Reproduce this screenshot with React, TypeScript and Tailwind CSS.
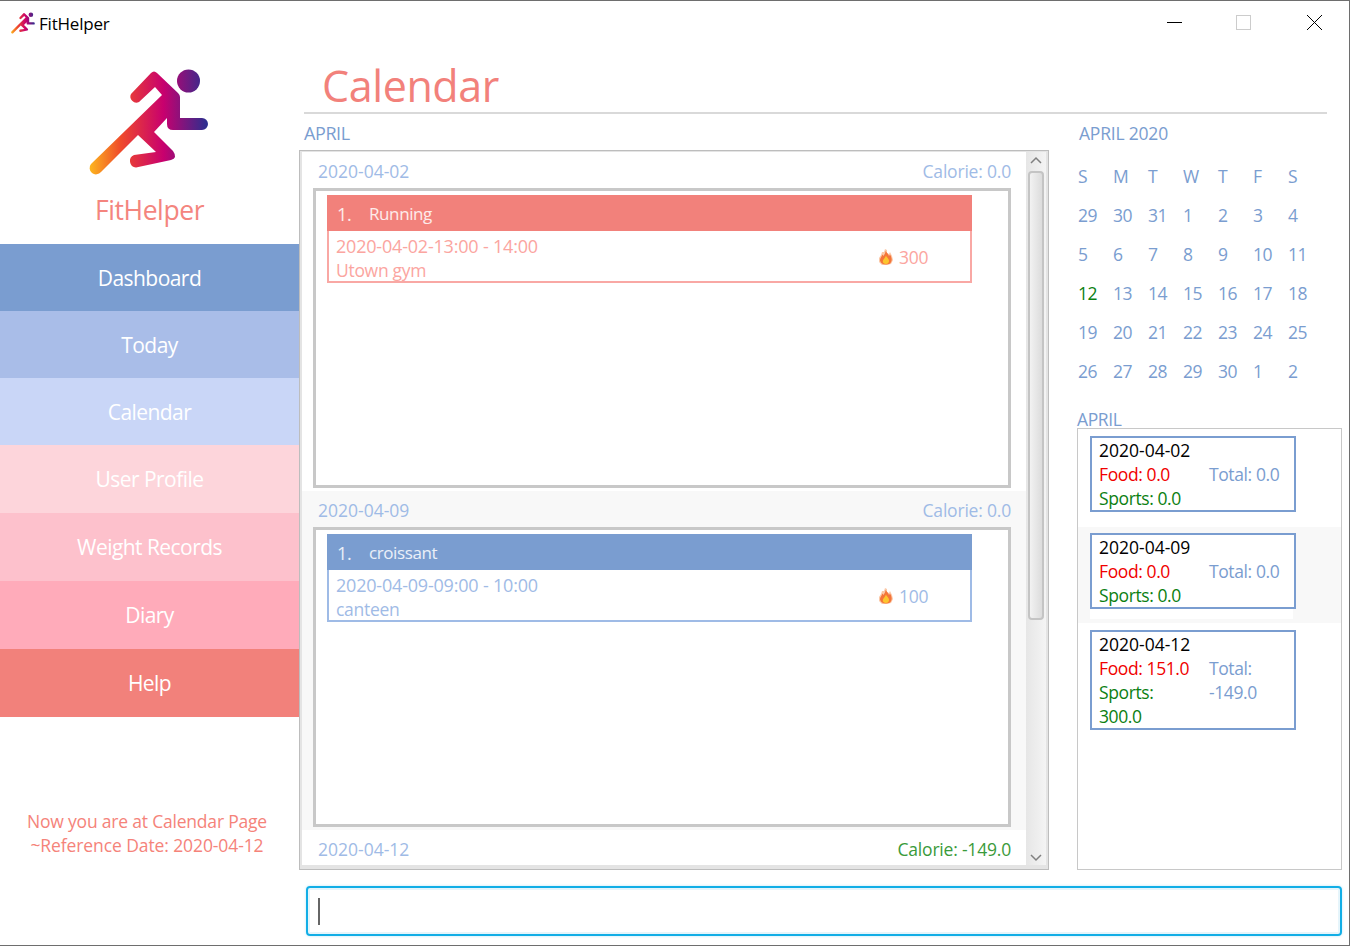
const navItems = [
  { label: "Dashboard", cls: "h-[67px] bg-[#7a9dd0]" },
  { label: "Today", cls: "h-[67px] bg-[#a9bde8]" },
  { label: "Calendar", cls: "h-[67px] bg-[#c9d6f7]" },
  { label: "User Profile", cls: "h-[68px] bg-[#fdd5db]" },
  { label: "Weight Records", cls: "h-[68px] bg-[#fdc1cc]" },
  { label: "Diary", cls: "h-[68px] bg-[#ffabba]" },
  { label: "Help", cls: "h-[68px] bg-[#f2817b]" },
];

const weeks = [
  ["S", "M", "T", "W", "T", "F", "S"],
  ["29", "30", "31", "1", "2", "3", "4"],
  ["5", "6", "7", "8", "9", "10", "11"],
  ["12", "13", "14", "15", "16", "17", "18"],
  ["19", "20", "21", "22", "23", "24", "25"],
  ["26", "27", "28", "29", "30", "1", "2"],
];

function Logo({ className }: { className: string }) {
  return (
    <svg viewBox="85 62 130 120" className={className}>
      <defs>
        <linearGradient id="runner" gradientUnits="userSpaceOnUse" x1="90" y1="0" x2="208" y2="0">
          <stop offset="0" stopColor="#fdb81e" />
          <stop offset="0.27" stopColor="#ef4a2b" />
          <stop offset="0.63" stopColor="#c8006e" />
          <stop offset="1" stopColor="#2b2e8f" />
        </linearGradient>
      </defs>
      <circle cx="189.5" cy="81" r="11.5" fill="url(#runner)" />
      <path
        fill="url(#runner)"
        d="M152 73 Q155 70 158 73 L179 93 Q181 95 181 97 L181 118 L203 118 A6 6 0 0 1 203 130 L174 130 Q168 130 168 124 L168 118 L155 132 L174 151 Q179 158 172 160 L137 167.5 A6.5 6.5 0 0 1 135 155 L157 152 L139 135 L102 172 A6 6 0 0 1 92 164 L163 95 L156 87 L140 102 A6 6 0 0 1 132 94 Z"
      />
    </svg>
  );
}

function Flame() {
  return (
    <svg viewBox="0 0 14 16" className="h-4 w-[14px]">
      <path fill="#fbc9a8" d="M6 0 L8 1 L8 4 L10 5 L11 3 L13 7 L14 11 L12 15 L8 16 L3 16 L0 13 L0 9 L2 6 L3 3 L5 3 Z" />
      <path fill="#f4753a" d="M6.500 2 C8 4 9.500 5 10 7 L11 5.500 C12.500 8 13 10 12.500 12 C12 14.500 10 15.500 7 15.500 C3.500 15.500 1.500 14 1 11.500 C.8 9.500 2.500 8 3.500 5.500 L4.500 7 C5.500 5.500 6.500 4 6.500 2 Z" />
      <path fill="#fcc52e" d="M7 6.500 C7.500 8.500 10.500 10 10 12.500 C9.700 14.200 8.500 15 7 15 C5 15 3.800 14 3.800 12.200 C3.800 10.500 6.200 9 7 6.500 Z" />
    </svg>
  );
}

function EventCard({
  title, time, place, calories, head, line, text,
}: { title: string; time: string; place: string; calories: string; head: string; line: string; text: string }) {
  return (
    <div className={`ml-[11px] w-[645px] border-x-2 border-b-2 ${line} bg-white`}>
      <div className={`-mx-[2px] flex h-[36px] items-center pt-[2px] text-[18px] text-white/85 ${head}`}>
        <span className="w-[42px] pl-[10px]">1.</span>
        <span className="text-[17px]">{title}</span>
      </div>
      <div className={`relative h-[50px] pl-[7px] pt-[3px] text-[17.5px] leading-[24px] tracking-[-0.3px] ${text}`}>
        <div className="text-[18px] tracking-[-0.2px]">{time}</div>
        <div>{place}</div>
        <div className="absolute left-[550px] top-[14px] flex items-center gap-[6px]">
          <Flame />
          <span>{calories}</span>
        </div>
      </div>
    </div>
  );
}

function DayCell({
  date, calorie, calorieColor, alt, children,
}: { date: string; calorie: string; calorieColor: string; alt?: boolean; children?: React.ReactNode }) {
  return (
    <div className={`h-[339px] shrink-0 pl-[11px] ${alt ? "bg-[#f8f8f8]" : "bg-white"}`}>
      <div className="flex h-[36px] items-center justify-between pr-[15px] pt-[2px] text-[17.5px]">
        <span className="pl-[5px] tracking-normal text-[#9fbbe6]">{date}</span>
        <span className={`tracking-[-0.2px] ${calorieColor}`}>{calorie}</span>
      </div>
      <div className="h-[300px] w-[698px] border-[3px] border-[#c8c8c8] bg-white pt-[4px]">{children}</div>
    </div>
  );
}

function SummaryCard({
  date, food, total, sports, pad,
}: { date: string; food: string; total: string; sports: string; pad: string }) {
  return (
    <div className={pad}>
      <div className="w-[203px] bg-white pb-[10px]">
        <div className="w-[206px] border-2 border-[#7a9dd0] bg-white pl-[7px] text-[17.5px] leading-[24px]">
          <div className="tracking-normal text-black">{date}</div>
          <div className="flex">
            <div className="w-[110px] pr-[10px]">
              <div className="text-[#f00000]">Food: {food}</div>
              <div className="text-[#0b8012]">Sports: {sports}</div>
            </div>
            <div className="w-[78px] text-[#7a9dd0]">Total: {total}</div>
          </div>
        </div>
      </div>
    </div>
  );
}

export default function App() {
  return (
    <div className="flex h-[946px] w-[1350px] flex-col overflow-hidden border-y border-r border-[#6e6e6e] bg-white font-['Open_Sans',sans-serif] tracking-[-0.4px]">
      {/* title bar */}
      <div className="flex h-[45px] shrink-0 items-start justify-between">
        <div className="flex items-center gap-[3px] pl-[10px] pt-[9px] text-[17px] tracking-[-0.2px] text-black">
          <Logo className="h-[24px] w-[26px]" />
          <span className="mt-[1px]">FitHelper</span>
        </div>
        <div className="mt-[14px] flex h-[15px] items-center pr-[27px]">
          <div className="h-[1px] w-[15px] bg-black" />
          <div className="ml-[54px] h-[15px] w-[15px] border border-[#cccccc]" />
          <svg viewBox="0 0 15 15" className="ml-[56px] h-[15px] w-[15px] stroke-black stroke-[1]">
            <path d="M0 0 L15 15 M15 0 L0 15" />
          </svg>
        </div>
      </div>

      <div className="flex min-h-0 flex-1">
        {/* sidebar */}
        <div className="flex w-[299px] shrink-0 flex-col">
          <div className="flex h-[198px] flex-col items-center">
            <Logo className="mt-[16px] h-[120px] w-[130px] -translate-x-[1px]" />
            <div className="mt-[10px] text-[26.5px] leading-[36px] text-[#f4857e]">FitHelper</div>
          </div>
          {navItems.map((item) => (
            <div key={item.label} className={`flex items-center justify-center pt-[2px] text-[21px] tracking-[-0.55px] text-white ${item.cls}`}>
              {item.label}
            </div>
          ))}
          <div className="pr-[5px] pt-[92px] text-center text-[17.5px] leading-[24px] text-[#f5837a]">
            <div className="tracking-[-0.2px]">Now you are at Calendar Page</div>
            <div className="tracking-[-0.1px]">~Reference Date: 2020-04-12</div>
          </div>
        </div>

        {/* main */}
        <div className="flex min-w-0 flex-1 flex-col">
          <div className="ml-[5px] mr-[22px] h-[68px] shrink-0 border-b-2 border-[#d9d9d9] pl-[18px] text-[43px] leading-[80px] text-[#f2817b]">
            Calendar
          </div>
          <div className="flex h-[756px] shrink-0">
            <div className="flex w-[750px] shrink-0 flex-col">
              <div className="flex h-[36px] items-center pl-[5px] pt-[2px] text-[18px] text-[#7a9dd0]">APRIL</div>
              <div className="h-[720px] border border-[#bdbdbd]">
                <div className="flex h-full border-x-2 border-b-4 border-t border-[#e4e4e4]">
                  <div className="flex min-w-0 flex-1 flex-col overflow-hidden">
                    <DayCell date="2020-04-02" calorie="Calorie: 0.0" calorieColor="text-[#9fbbe6]">
                      <EventCard title="Running" time="2020-04-02-13:00 - 14:00" place="Utown gym" calories="300" head="bg-[#f2817b]" line="border-[#f9a8a4]" text="text-[#fba5a0]" />
                    </DayCell>
                    <DayCell date="2020-04-09" calorie="Calorie: 0.0" calorieColor="text-[#9fbbe6]" alt>
                      <EventCard title="croissant" time="2020-04-09-09:00 - 10:00" place="canteen" calories="100" head="bg-[#7a9dd0]" line="border-[#9fbbe6]" text="text-[#9fbbe6]" />
                    </DayCell>
                    <DayCell date="2020-04-12" calorie="Calorie: -149.0" calorieColor="text-[#3a9a3a]" />
                  </div>
                  {/* scrollbar */}
                  <div className="flex w-[20px] shrink-0 flex-col items-center bg-gradient-to-r from-[#e6e6e6] to-[#f4f4f4]">
                    <svg viewBox="0 0 12 8" className="mt-[4px] h-[8px] w-[12px] fill-none stroke-[#808080] stroke-[1.5]"><path d="M1 7 L6 2 L11 7" /></svg>
                    <div className="mt-[7px] h-[449px] w-[16px] rounded-[4px] border-2 border-[#c4c4c4] bg-gradient-to-r from-[#f2f2f2] to-[#dcdcdc]" />
                    <svg viewBox="0 0 12 8" className="mb-[3px] mt-auto h-[8px] w-[12px] fill-none stroke-[#808080] stroke-[1.5]"><path d="M1 1 L6 6 L11 1" /></svg>
                  </div>
                </div>
              </div>
            </div>

            <div className="ml-[28px] flex w-[265px] shrink-0 flex-col">
              <div className="flex h-[36px] items-center pl-[2px] pt-[2px] text-[17.5px] tracking-[-0.2px] text-[#7a9dd0]">APRIL 2020</div>
              <div className="mt-[7px] grid h-[234px] grid-cols-[repeat(7,35px)] grid-rows-[repeat(6,39px)] pl-[1px] text-[17.5px] tracking-[-0.5px] text-[#7a9dd0]">
                {weeks.map((week, i) =>
                  week.map((day, j) => (
                    <div key={`${i}-${j}`} className={`flex items-center ${i === 3 && j === 0 ? "text-[#0b8012]" : ""}`}>
                      {day}
                    </div>
                  )),
                )}
              </div>
              <div className="mt-[16px] h-[22px] text-[17.5px] leading-[24px] text-[#7a9dd0]">APRIL</div>
              <div className="mt-[-1px] h-[442px] border border-[#c8c8c8] pt-[1px]">
                <SummaryCard date="2020-04-02" food="0.0" total="0.0" sports="0.0" pad="pb-[5px] pl-[12px] pt-[6px]" />
                <SummaryCard date="2020-04-09" food="0.0" total="0.0" sports="0.0" pad="bg-[#f8f8f8] pb-[4px] pl-[12px] pt-[6px]" />
                <SummaryCard date="2020-04-12" food="151.0" total="-149.0" sports="300.0" pad="pl-[12px] pt-[7px]" />
              </div>
            </div>
          </div>

          {/* command box */}
          <div className="ml-[7px] mr-[7px] mt-[16px] flex h-[50px] shrink-0 items-center rounded-[4px] border-2 border-[#12aee6] pl-[10px] shadow-[0_0_3px_#bfe9f8,inset_0_0_0_2px_#e6f5fb]">
            <div className="h-[27px] w-[2px] bg-[#666666]" />
          </div>
        </div>
      </div>
    </div>
  );
}
